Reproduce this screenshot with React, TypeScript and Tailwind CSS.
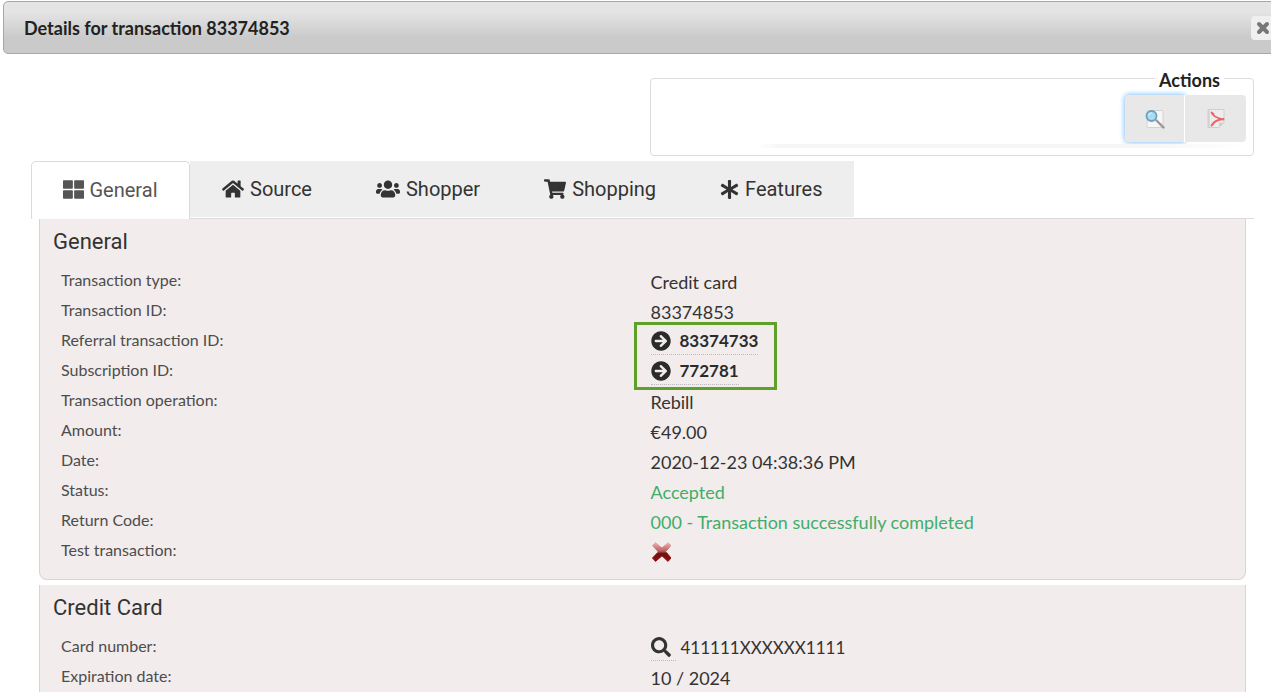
import type { ReactNode } from "react";
import {
  FaArrowCircleRight,
  FaAsterisk,
  FaHome,
  FaSearch,
  FaShoppingCart,
  FaThLarge,
  FaUsers,
} from "react-icons/fa";

const tabs = [
  { label: "Source", icon: FaHome, size: "size-[22px]" },
  { label: "Shopper", icon: FaUsers, size: "size-6" },
  { label: "Shopping", icon: FaShoppingCart, size: "size-[22px]" },
  { label: "Features", icon: FaAsterisk, size: "size-[19px]" },
];

function Row({ label, children }: { label: string; children: ReactNode }) {
  return (
    <div className="grid h-[30px] grid-cols-2">
      <dt className="text-[16px] leading-7 text-[#4d4d4d]">{label}</dt>
      <dd className="pt-px text-[18px] leading-[30px] text-[#333]">{children}</dd>
    </div>
  );
}

function Panel({ title, children }: { title: string; children: ReactNode }) {
  return (
    <section className="rounded-b-lg border border-t-0 border-[#d5d5d5] bg-[#f2ecec] pr-[5px] pb-[13px] pl-[21px]">
      <h2 className="-ml-2 h-[47px] font-[Roboto,sans-serif] text-[22px] leading-[46px] text-[#333]">{title}</h2>
      <dl>{children}</dl>
    </section>
  );
}

function RefLink({ children }: { children: ReactNode }) {
  return (
    <a href="#" className="inline-flex h-7 items-center gap-[9px] border-b border-dotted border-[#bbb] pt-px text-[17px] font-bold text-[#2b2b2b]">
      <FaArrowCircleRight className="size-5" />
      {children}
    </a>
  );
}

function PreviewIcon() {
  return (
    <svg viewBox="0 0 20 20" className="size-5" aria-hidden="true">
      <rect x="2" y="1.500" width="16" height="17" rx="1" fill="#f6f6f6" stroke="#d2d2d2" />
      <path d="M11.500 11.500 18.500 18.500" stroke="#999" strokeWidth="2.400" strokeLinecap="round" />
      <circle cx="6.500" cy="7" r="5" fill="#a9dcf2" stroke="#6b9fc4" strokeWidth="1.800" />
      <path d="M3.800 6.500a3 3 0 0 1 3-2.500" fill="none" stroke="#d9f3fc" strokeWidth="1.200" />
    </svg>
  );
}

function PdfIcon() {
  return (
    <svg viewBox="0 0 20 20" className="size-5" aria-hidden="true">
      <path d="M2 .5h16v13l-5 5H2z" fill="#ededed" stroke="#cfcfcf" />
      <path d="M3 1v17" stroke="#c6c6c6" />
      <path d="M18 13.500h-5v5z" fill="#d0d0d0" />
      <path
        d="M5.500 3.500c1 3 4.500 5.500 12 7M17.500 10C12 10.500 7.500 12.500 5.500 16.500M5.500 3.500l2 1.500M5.500 16.500l2-2"
        fill="none"
        stroke="#ee6468"
        strokeWidth="1.800"
        strokeLinecap="round"
      />
    </svg>
  );
}

function CrossIcon() {
  return (
    <svg viewBox="0 0 20 20" className="size-5" role="img" aria-label="No">
      <defs>
        <linearGradient id="cross" x1="0" y1="0" x2="0" y2="20" gradientUnits="userSpaceOnUse">
          <stop offset="0.100" stopColor="#e8a4a4" />
          <stop offset="0.450" stopColor="#b86060" />
          <stop offset="0.580" stopColor="#701010" />
          <stop offset="1" stopColor="#9a0c0c" />
        </linearGradient>
      </defs>
      <path
        d="M1.500 3.500 4.500.8 11 6 17 .8 20 3.500 14.600 9.600 20 16 17 19.400 11 13.800 4.500 19.400 1.500 16 7.400 9.900z"
        fill="url(#cross)"
        stroke="url(#cross)"
        strokeWidth="1"
        strokeLinejoin="round"
      />
    </svg>
  );
}

export default function App() {
  return (
    <div className="h-screen overflow-hidden bg-white font-[Lato,sans-serif] text-[#222]">
      <header className="mt-px -mr-2 ml-[3px] flex h-[53px] items-center justify-between rounded-[5px] border border-[#a6a8a6] bg-linear-to-b from-[#e4e4e4] from-20% to-[#cacaca] to-70% pr-px pl-5">
        <h1 className="text-[18px] leading-6 font-bold">Details for transaction 83374853</h1>
        <button type="button" aria-label="Close" className="flex h-6 w-[26px] items-center rounded-[4px] bg-[#efefef] pt-px pl-[5px]">
          <svg viewBox="0 0 14 14" className="size-[14px]" aria-hidden="true">
            <path d="M3 3l8 8M11 3l-8 8" stroke="#777" strokeWidth="4" strokeLinecap="round" />
          </svg>
        </button>
      </header>

      <main className="mt-[14px] pr-[17px] pl-[31px]">
        <div className="flex justify-end">
          <fieldset className="flex h-[88px] w-[604px] flex-col rounded-[4px] border border-[#dcdcdc] pr-[7px]">
            <legend className="mr-[22px] ml-auto h-5 px-1 text-[18px] leading-6 font-bold">Actions</legend>
            <div className="mt-[7px] flex justify-end">
              <div className="flex h-[47px]">
                <button type="button" aria-label="Preview" className="flex w-[59px] items-center justify-center rounded-l-[4px] bg-[#e8e8e8] shadow-[0_0_5px_1px_#8cc6fb]">
                  <PreviewIcon />
                </button>
                <button type="button" aria-label="Export PDF" className="flex w-[62px] items-center justify-center rounded-r-[4px] border-l border-white bg-[#e8e8e8]">
                  <PdfIcon />
                </button>
              </div>
            </div>
            <div className="mt-[2px] ml-[105px] h-1 shrink-0 bg-[linear-gradient(to_right,white,#f6f6f6_5%,#f6f6f6_80%,white)]" />
          </fieldset>
        </div>

        <nav className="mt-[5px] flex border-b border-[#dadada] font-[Roboto,sans-serif] text-[20px] leading-6 text-[#333]">
          <button type="button" className="-mb-px flex h-[58px] w-[159px] items-center justify-center gap-[5px] rounded-t-[5px] border border-b-0 border-[#dadada] bg-white pb-[2px] text-[#555]">
            <FaThLarge className="size-[21px]" />
            General
          </button>
          {tabs.map(({ label, icon: Icon, size }) => (
            <button key={label} type="button" className="flex h-14 items-center gap-[6px] bg-[#eee] px-8">
              <Icon className={size} />
              {label}
            </button>
          ))}
        </nav>

        <div className="flex flex-col gap-[5px] px-2">
          <Panel title="General">
            <Row label="Transaction type:">Credit card</Row>
            <Row label="Transaction ID:">83374853</Row>
            <Row label="Referral transaction ID:">
              <span className="relative flex">
                <RefLink>83374733</RefLink>
                <span className="pointer-events-none absolute -top-[5px] -left-[17px] h-[68px] w-[143px] border-3 border-[#5fa02a]" />
              </span>
            </Row>
            <Row label="Subscription ID:">
              <span className="flex">
                <RefLink>772781</RefLink>
              </span>
            </Row>
            <Row label="Transaction operation:">Rebill</Row>
            <Row label="Amount:">€49.00</Row>
            <Row label="Date:">2020-12-23 04:38:36 PM</Row>
            <Row label="Status:">
              <span className="text-[#3fae6a]">Accepted</span>
            </Row>
            <Row label="Return Code:">
              <span className="text-[#3fae6a]">000 - Transaction successfully completed</span>
            </Row>
            <Row label="Test transaction:">
              <span className="flex h-[30px] items-center">
                <CrossIcon />
              </span>
            </Row>
          </Panel>
          <Panel title="Credit Card">
            <Row label="Card number:">
              <span className="flex gap-[5px] text-[17px]">
                <a href="#" aria-label="Show card number" className="flex h-7 w-[25px] items-center border-b border-dotted border-[#bbb]">
                  <FaSearch className="size-5" />
                </a>
                411111XXXXXX1111
              </span>
            </Row>
            <Row label="Expiration date:">10 / 2024</Row>
          </Panel>
        </div>
      </main>
    </div>
  );
}
